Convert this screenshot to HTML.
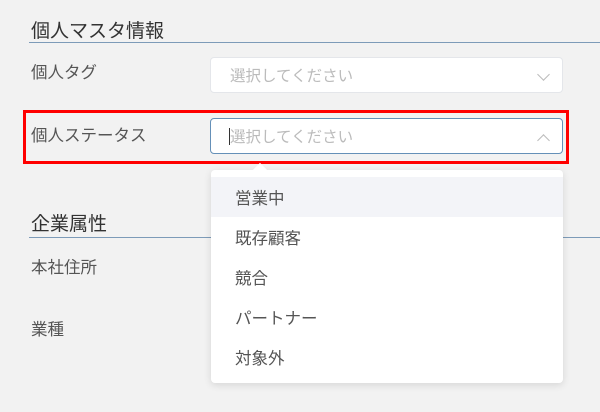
<!DOCTYPE html>
<html><head><meta charset="utf-8"><style>
*{margin:0;padding:0;box-sizing:border-box}
body{width:600px;height:412px;background:#f2f2f2;font-family:"Liberation Sans","Noto Sans CJK JP",sans-serif;position:relative;overflow:hidden;color:#555}
.a{position:absolute}
.h{font-size:19px;color:#333;left:31px;line-height:1.2}
.line{height:1px;background:#7d9bb8;left:29px;right:0}
.lbl{font-size:16.5px;color:#555;left:31px;line-height:1.2}
.sel{background:#fff;border:1px solid #e4e6ea;border-radius:4px;left:210px;width:353px;height:36px;font-size:15.5px;color:#bbb;padding:6px 0 0 19px}
.chev{position:absolute;right:14px;top:12px;width:9px;height:9px;border-right:1.3px solid #bbb;border-bottom:1.3px solid #bbb;transform:rotate(45deg)}
.up{transform:rotate(-135deg);top:17px}
.dd{left:211px;top:170px;width:352px;height:213px;background:#fff;border-radius:4px;box-shadow:0 2px 8px rgba(0,0,0,.12)}
.it{position:absolute;left:0;right:0;height:40px;padding:8px 0 0 24px;font-size:16.5px;color:#555}
</style></head><body>
<div class="a h" style="top:21px">個人マスタ情報</div>
<div class="a line" style="top:42px"></div>
<div class="a lbl" style="top:64px">個人タグ</div>
<div class="a sel" style="top:57px">選択してください<span class="chev"></span></div>
<div class="a" style="left:23px;top:110px;width:546px;height:54px;border:3px solid #f00"></div>
<div class="a lbl" style="top:127px">個人ステータス</div>
<div class="a sel" style="top:118px;border-color:#6590b8">選択してください<span class="chev up"></span><span style="position:absolute;left:18px;top:9px;width:1px;height:17px;background:#333"></span></div>
<div class="a h" style="top:214px">企業属性</div>
<div class="a line" style="top:237px"></div>
<div class="a lbl" style="top:259px">本社住所</div>
<div class="a lbl" style="top:321px">業種</div>
<div class="a dd">
<div class="a" style="left:44px;top:-5px;width:10px;height:10px;background:#fff;transform:rotate(45deg)"></div>
<div class="it" style="top:7px;background:#f3f4f8">営業中</div>
<div class="it" style="top:47px">既存顧客</div>
<div class="it" style="top:87px">競合</div>
<div class="it" style="top:127px">パートナー</div>
<div class="it" style="top:167px">対象外</div>
</div>
</body></html>
